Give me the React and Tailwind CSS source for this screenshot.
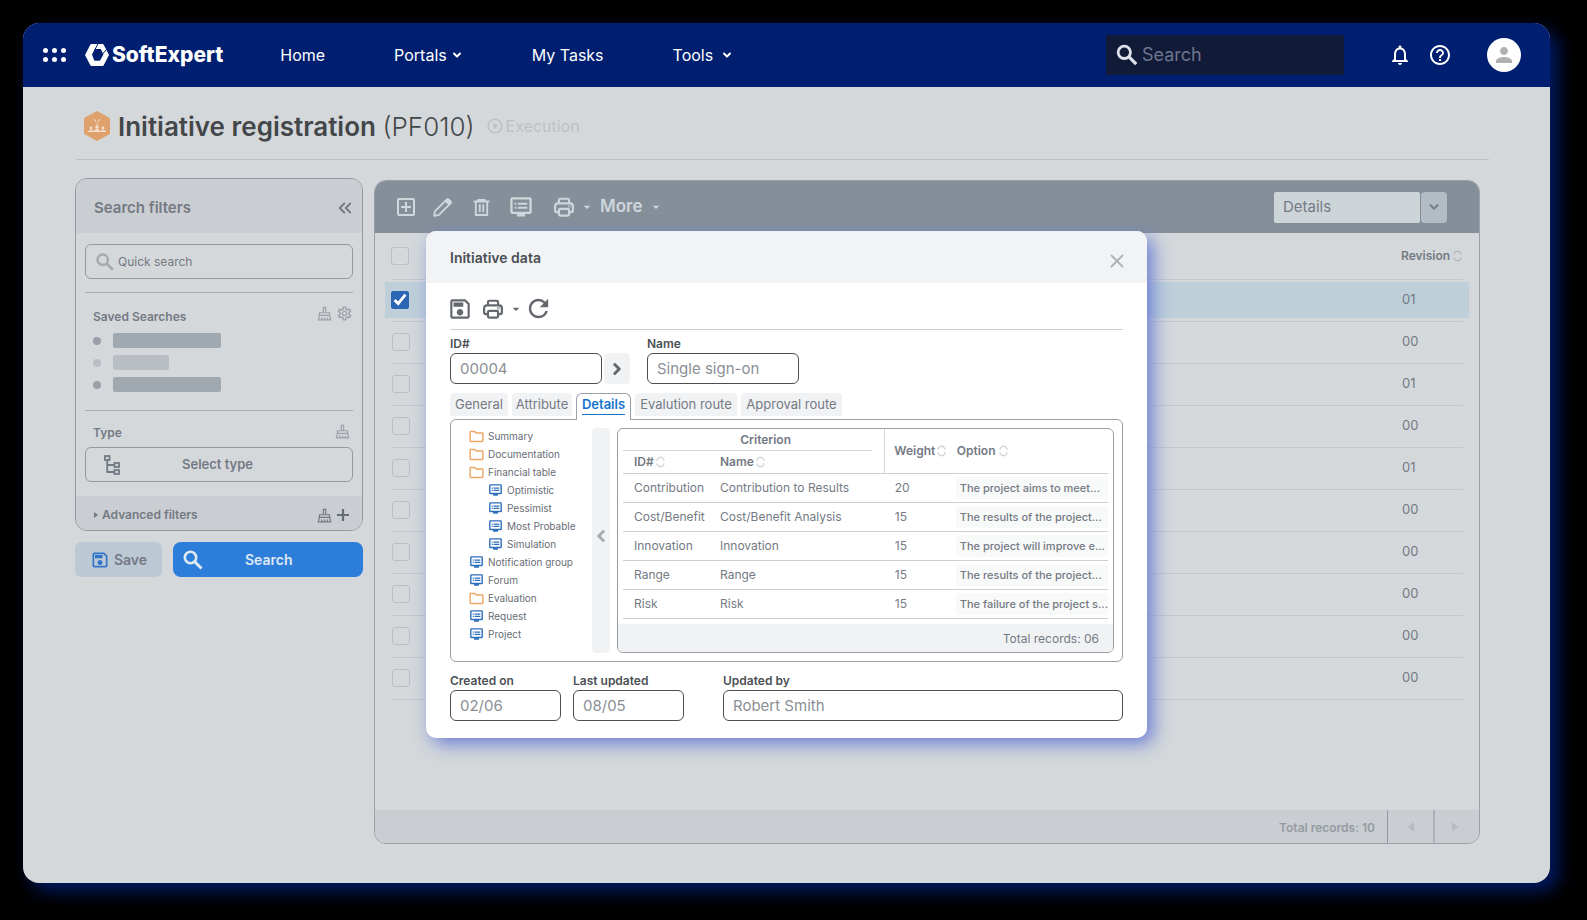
import {
  MdArrowDropDown,
  MdHelpOutline,
  MdNotificationsNone,
  MdOutlineAddBox,
  MdOutlineFolder,
  MdOutlineSave,
  MdOutlineSettings,
  MdPerson,
  MdPlayCircleOutline,
  MdRefresh,
} from 'react-icons/md';
import { ChevronDown, ChevronLeft, ChevronRight, X } from 'lucide-react';

const rows = [
  { revision: '01', selected: true },
  { revision: '00' },
  { revision: '01' },
  { revision: '00' },
  { revision: '01' },
  { revision: '00' },
  { revision: '00' },
  { revision: '00' },
  { revision: '00' },
  { revision: '00' },
];

const tree = [
  { label: 'Summary', folder: true },
  { label: 'Documentation', folder: true },
  { label: 'Financial table', folder: true },
  { label: 'Optimistic', nested: true },
  { label: 'Pessimist', nested: true },
  { label: 'Most Probable', nested: true },
  { label: 'Simulation', nested: true },
  { label: 'Notification group' },
  { label: 'Forum' },
  { label: 'Evaluation', folder: true },
  { label: 'Request' },
  { label: 'Project' },
];

const criteria = [
  { id: 'Contribution', name: 'Contribution to Results', weight: 20, option: 'The project aims to meet...' },
  { id: 'Cost/Benefit', name: 'Cost/Benefit Analysis', weight: 15, option: 'The results of the project...' },
  { id: 'Innovation', name: 'Innovation', weight: 15, option: 'The project will improve e...' },
  { id: 'Range', name: 'Range', weight: 15, option: 'The results of the project...' },
  { id: 'Risk', name: 'Risk', weight: 15, option: 'The failure of the project s...' },
];

function SearchIcon({ className }) {
  return (
    <svg viewBox="0 0 24 24" fill="none" stroke="currentColor" strokeWidth="2.6" className={className}>
      <circle cx="9.500" cy="9.500" r="5.700" />
      <path d="M13.800 13.800l6.700 6.700" strokeWidth="3" />
    </svg>
  );
}

function PrintIcon({ className }) {
  return (
    <svg viewBox="0 0 24 24" fill="none" stroke="currentColor" strokeWidth="2.4" strokeLinejoin="round" className={className}>
      <path d="M6.500 8V4.500a1.500 1.500 0 0 1 1.500-1.500h8a1.500 1.500 0 0 1 1.500 1.500V8" />
      <path d="M6.500 17.500H4.300a2 2 0 0 1-2-2V11a3 3 0 0 1 3-3h13.400a3 3 0 0 1 3 3v4.500a2 2 0 0 1-2 2h-2.200" />
      <rect x="6.500" y="14" width="11" height="7.500" rx="1.500" />
      <circle cx="17.800" cy="11.300" r=".3" />
    </svg>
  );
}

function PencilIcon({ className }) {
  return (
    <svg viewBox="0 0 24 24" fill="none" stroke="currentColor" strokeWidth="2.2" strokeLinejoin="round" className={className}>
      <path d="M2.500 21.500l.8-5L16.800 3a1.600 1.600 0 0 1 2.300 0l2 2a1.600 1.600 0 0 1 0 2.300L7.600 20.700z" />
      <path d="M15.500 4.500l4 4 2-2.500-3.500-3.500z" fill="currentColor" />
    </svg>
  );
}

function TrashIcon({ className }) {
  return (
    <svg viewBox="0 0 24 24" fill="none" stroke="currentColor" strokeWidth="2.4" className={className}>
      <path d="M2 4.500h20M8 4V2.500h8V4" />
      <path d="M4.800 5v16.500h14.400V5" />
      <path d="M9.800 8v10M14.200 8v10" />
    </svg>
  );
}

function ScreenIcon({ className }) {
  return (
    <svg viewBox="0 0 24 22" fill="none" stroke="currentColor" strokeWidth="2.600" className={className}>
      <rect x="1.500" y="1.500" width="21" height="16" rx="1" />
      <path d="M5 7.500h2M8.500 7.500H19M5 11.800h2M8.500 11.800H19" strokeWidth="2.200" />
      <path d="M7.500 18h9v3.500h-9z" fill="currentColor" stroke="none" />
    </svg>
  );
}

function BrushIcon({ className }) {
  return (
    <svg viewBox="0 0 16 16" fill="none" stroke="currentColor" strokeWidth="1.300" className={className}>
      <path d="M6.800 7V1.500h2.400V7" />
      <path d="M2.600 10V7.200h10.800V10" />
      <path d="M2.600 10l-1.200 4.700h13.200L13.400 10z" />
      <path d="M5 14.500v-2.200M8 14.500v-2.200M11 14.500v-2.200" />
    </svg>
  );
}

function TypeTreeIcon({ className }) {
  return (
    <svg viewBox="0 0 16 20" fill="none" stroke="currentColor" strokeWidth="1.800" className={className}>
      <rect x="1" y="1" width="4.500" height="4" />
      <rect x="10.500" y="8" width="4.500" height="4" />
      <rect x="10.500" y="15" width="4.500" height="4" />
      <path d="M3.200 5v12h7.300M3.200 10h7.300" />
    </svg>
  );
}

function SortIcon() {
  return (
    <svg viewBox="0 0 10 14" fill="none" stroke="currentColor" strokeWidth="1.400" className="h-3 w-[9px] opacity-35">
      <path d="M1 5.500V4l2.500-2.500h3L9 4v1.500M1 8.500V10l2.500 2.500h3L9 10V8.500" />
    </svg>
  );
}

function Logo() {
  return (
    <div className="flex items-center gap-[3px]">
      <svg viewBox="0 0 24 22" className="h-[22px] w-6">
        <path
          fillRule="evenodd"
          fill="#fff"
          d="M6.500 0h11q.8 0 1.200.8L24 11l-5.300 10.200q-.4.800-1.200.8h-11q-.8 0-1.200-.8L0 11 5.300.8Q5.700 0 6.500 0zM9.800 5L7 10.500l2 5.500q.3.800 1.200.8h4q.8 0 1.200-.8l3-5.500L15.800 5z"
        />
        <path d="M12.800 0L10 5.500M21.500 5.500L17.500 10" stroke="#001f71" strokeWidth="1" />
      </svg>
      <span className="text-[21px] leading-7 font-extrabold text-white">SoftExpert</span>
    </div>
  );
}

function TopBar() {
  return (
    <header className="flex h-16 items-center bg-[#001f71] pr-[29px] pl-5 text-white">
      <button aria-label="Applications" className="grid grid-cols-3 gap-x-1 gap-y-1">
        {[0, 1, 2, 3, 4, 5].map((dot) => (
          <span key={dot} className="h-[5px] w-[5px] rounded-full bg-white" />
        ))}
      </button>
      <a href="#home" className="ml-[19px]"><Logo /></a>
      <nav className="ml-[57px] flex items-center gap-[69px] text-base">
        <a href="#home">Home</a>
        <button className="flex items-center gap-1">
          Portals
          <ChevronDown className="h-3 w-3" strokeWidth={4} />
        </button>
        <a href="#tasks">My Tasks</a>
        <button className="flex items-center gap-2">
          Tools
          <ChevronDown className="h-3 w-3" strokeWidth={4} />
        </button>
      </nav>
      <label className="ml-auto flex h-10 w-[238px] items-center gap-0.5 bg-[#111a37] pl-2">
        <SearchIcon className="h-[26px] w-[26px] shrink-0 text-[#dde3ea]" />
        <input
          aria-label="Search"
          placeholder="Search"
          className="w-full min-w-0 bg-transparent text-lg outline-none placeholder:text-[#6d7590]"
        />
      </label>
      <button aria-label="Notifications" className="ml-11">
        <MdNotificationsNone className="h-6 w-6" />
      </button>
      <button aria-label="Help" className="ml-4">
        <MdHelpOutline className="h-6 w-6" />
      </button>
      <button aria-label="Account" className="ml-[35px] flex h-[34px] w-[34px] items-center justify-center rounded-full bg-white">
        <MdPerson className="h-6 w-6 text-[#b0b0b0]" />
      </button>
    </header>
  );
}

function PageTitle() {
  return (
    <div className="mr-[61px] ml-[53px] flex h-[73px] items-center border-b border-[#bbc0c5] pt-1.5 pl-2">
      <svg viewBox="0 0 26 30" className="h-[30px] w-[26px]">
        <path d="M13 0l12 6.500q1 .5 1 1.500v14q0 1-1 1.500L13 30 1 23.500q-1-.5-1-1.500V8q0-1 1-1.500z" fill="#dfa26d" />
        <g fill="#f3dfcf">
          <circle cx="7" cy="17" r="1.500" />
          <circle cx="13" cy="16" r="1.700" />
          <circle cx="19" cy="17" r="1.500" />
          <path d="M4 21q0-2 3-2t3 2zM10 21q0-3 3-3t3 3zM16 21q0-2 3-2t3 2z" />
        </g>
        <path d="M10 8l2 3M16 8l-2 3M13 12v2" stroke="#f3dfcf" fill="none" />
      </svg>
      <h1 className="ml-2 text-[26px] font-semibold whitespace-nowrap text-[#434749]">
        Initiative registration <span className="font-light">(PF010)</span>
      </h1>
      <span className="ml-[11px] flex items-center gap-0.5 text-base text-[#bcc1c6]">
        <MdPlayCircleOutline className="h-[18px] w-[18px]" />
        Execution
      </span>
    </div>
  );
}

function SearchFilters() {
  return (
    <aside className="-mt-0.5 w-72 shrink-0 text-[#747a84]">
      <div className="overflow-hidden rounded-xl border border-[#9499a1]">
        <div className="flex h-[54px] items-center justify-between bg-[#cacdd2] pt-1 pr-[5px] pl-[18px]">
          <h2 className="text-[15px] font-semibold">Search filters</h2>
          <button aria-label="Collapse filters" className="flex">
            <ChevronLeft className="-mr-3 h-[18px] w-[18px]" strokeWidth={2.5} />
            <ChevronLeft className="h-[18px] w-[18px]" strokeWidth={2.5} />
          </button>
        </div>
        <div className="px-[9px] pt-[11px]">
          <label className="flex h-[35px] items-center gap-0.5 rounded-md border border-[#9499a1] pl-2">
            <SearchIcon className="h-[22px] w-[22px] shrink-0 text-[#a3a9ae]" />
            <input
              aria-label="Quick search"
              placeholder="Quick search"
              className="w-full min-w-0 bg-transparent text-xs outline-none placeholder:text-[#747a84]"
            />
          </label>
          <div className="mt-[13px] h-[119px] border-y border-[#a9adb3] pt-3 pl-2">
            <div className="flex items-start justify-between">
              <h3 className="pt-1 text-xs leading-4 font-semibold">Saved Searches</h3>
              <div className="flex items-center gap-1 text-[#9ca1a9]">
                <BrushIcon className="h-[15px] w-[15px]" />
                <MdOutlineSettings className="h-[17px] w-[17px]" />
              </div>
            </div>
            <ul className="mt-2 space-y-[7px]">
              <li className="flex items-center gap-3">
                <span className="h-2 w-2 rounded-full bg-[#9a9fa8]" />
                <span className="h-[15px] w-[108px] rounded-xs bg-[#a1a9b0]" />
              </li>
              <li className="flex items-center gap-3">
                <span className="h-2 w-2 rounded-full bg-[#b9bdc4]" />
                <span className="h-[15px] w-14 rounded-xs bg-[#b9bec5]" />
              </li>
              <li className="flex items-center gap-3">
                <span className="h-2 w-2 rounded-full bg-[#9a9fa8]" />
                <span className="h-[15px] w-[108px] rounded-xs bg-[#a1a9b0]" />
              </li>
            </ul>
          </div>
          <div className="mt-[10px] flex items-center justify-between pr-[3px] pl-2">
            <h3 className="pt-1 text-xs leading-4 font-semibold">Type</h3>
            <BrushIcon className="h-[15px] w-[15px] text-[#9ca1a9]" />
          </div>
          <button className="mt-1.5 flex h-[35px] w-full items-center rounded-md border border-[#9499a1] pl-[18px] text-[13px] font-semibold">
            <TypeTreeIcon className="h-5 w-4" />
            <span className="ml-[62px]">Select type</span>
          </button>
        </div>
        <div className="mt-[14px] flex h-[34px] items-center bg-[#cacdd2] pt-1 pr-3 pl-[18px]">
          <span className="h-0 w-0 border-y-[3px] border-l-4 border-y-transparent border-l-[#747a84]" />
          <span className="ml-1 text-xs font-semibold">Advanced filters</span>
          <BrushIcon className="ml-auto h-[15px] w-[15px]" />
          <button aria-label="Add filter" className="ml-1 text-[#686e78]">
            <svg viewBox="0 0 14 14" className="h-[14px] w-[14px]">
              <path d="M7 1v12M1 7h12" stroke="currentColor" strokeWidth="2.200" />
            </svg>
          </button>
        </div>
      </div>
      <div className="mt-[11px] flex gap-[11px]">
        <button className="flex h-[35px] w-[87px] items-center justify-center gap-1 rounded-md bg-[#bcc8d4] text-sm font-semibold text-[#747a84]">
          <MdOutlineSave className="h-5 w-5 text-[#2f74c9]" />
          Save
        </button>
        <button className="flex h-[35px] flex-1 items-center rounded-lg bg-[#2d7edb] pl-2 text-sm font-semibold text-[#dfe9f2]">
          <SearchIcon className="h-6 w-6" />
          <span className="ml-10">Search</span>
        </button>
      </div>
    </aside>
  );
}

function Checkbox({ label, checked }) {
  return (
    <input
      type="checkbox"
      aria-label={label}
      defaultChecked={checked}
      className="h-[18px] w-[18px] appearance-none rounded-[3px] border border-[#bbbfc5] accent-[#2a66b4] checked:appearance-auto"
    />
  );
}

function Records() {
  return (
    <section className="flex min-w-0 flex-1 flex-col overflow-hidden rounded-xl border border-[#9aa0a7] text-[#747a84]">
      <div className="flex h-[52px] shrink-0 items-center bg-[#848f99] pr-8 pl-[19px] text-[#cfd6dc]">
        <button aria-label="New"><MdOutlineAddBox className="h-6 w-6" /></button>
        <button aria-label="Edit" className="ml-3.5"><PencilIcon className="h-[21px] w-[21px]" /></button>
        <button aria-label="Delete" className="ml-[19px]"><TrashIcon className="h-[19px] w-[19px]" /></button>
        <button aria-label="View" className="ml-[19px]"><ScreenIcon className="h-5 w-[22px]" /></button>
        <button aria-label="Print" className="ml-[21px] flex items-center">
          <PrintIcon className="h-[22px] w-[22px]" />
          <MdArrowDropDown className="ml-1 h-4 w-4" />
        </button>
        <button className="ml-[5px] flex items-center gap-1.5 text-[17px] font-semibold">
          More
          <MdArrowDropDown className="h-4 w-4" />
        </button>
        <select
          aria-label="Layout"
          className="ml-auto h-[31px] w-[146px] appearance-none rounded-xs bg-[#ced5d9] pl-[9px] text-[15px] text-[#747a84]"
        >
          <option>Details</option>
        </select>
        <button aria-label="Change layout" className="ml-px flex h-[31px] w-[26px] items-center justify-center rounded-sm bg-[#b3bbc5] text-[#7b828b]">
          <ChevronDown className="h-[14px] w-[14px]" strokeWidth={4} />
        </button>
      </div>
      <div className="flex-1 px-4">
        <table className="w-full border-collapse">
          <thead>
            <tr className="h-[46px] border-b border-[#c3c7cb]">
              <th className="p-0"><div className="flex"><Checkbox label="Select all" /></div></th>
              <th className="w-[62px] p-0">
                <span className="flex items-center gap-[3px] text-xs font-semibold">
                  Revision <SortIcon />
                </span>
              </th>
            </tr>
          </thead>
          <tbody>
            {rows.map((row, i) =>
              row.selected ? (
                <tr key={i} className="h-[42px] border-b border-[#c3c7cb]">
                  <td className="p-0">
                    <div className="-ml-1.5 flex h-9 items-center bg-[#becfda] pl-1.5">
                      <Checkbox label={`Record ${i + 1}`} checked />
                    </div>
                  </td>
                  <td className="p-0 text-[13px]">
                    <div className="-mr-1.5 flex h-9 items-center bg-[#becfda] pl-px">{row.revision}</div>
                  </td>
                </tr>
              ) : (
                <tr key={i} className="h-[42px] border-b border-[#c3c7cb]">
                  <td className="p-0 pl-px"><div className="flex"><Checkbox label={`Record ${i + 1}`} /></div></td>
                  <td className="p-0 pl-px text-[13px]">{row.revision}</td>
                </tr>
              ),
            )}
          </tbody>
        </table>
      </div>
      <footer className="flex h-[33px] shrink-0 items-stretch justify-end bg-[#cacdd2]">
        <p className="mr-3 pt-2.5 text-xs font-semibold text-[#959ba3]">Total records: 10</p>
        <button aria-label="Previous page" className="flex w-[46px] items-center justify-center border-l border-[#9499a1]">
          <span className="h-0 w-0 border-y-[5px] border-r-[6px] border-y-transparent border-r-[#b7bbc1]" />
        </button>
        <button aria-label="Next page" className="flex w-[46px] items-center border-l-2 border-[#adb1b7] pl-[17px]">
          <span className="h-0 w-0 border-y-[5px] border-l-[6px] border-y-transparent border-l-[#b7bbc1]" />
        </button>
      </footer>
    </section>
  );
}

function Field({ id, label, value, className }) {
  return (
    <div className={className}>
      <label htmlFor={id} className="block text-xs leading-4 font-semibold text-[#4b5055]">{label}</label>
      <input
        id={id}
        defaultValue={value}
        className="mt-px h-[31px] w-full rounded-md border border-[#4b4e52] bg-white px-[9px] text-[15px] text-[#8b8f94] outline-none"
      />
    </div>
  );
}

function Tabs() {
  const tab = 'h-[23px] rounded-t-sm bg-[#f1f2f4] text-center text-[13px] whitespace-nowrap text-[#747a84]';
  return (
    <div role="tablist" className="flex h-[26px] items-start gap-1">
      <button role="tab" className={`${tab} w-[58px]`}>General</button>
      <button role="tab" className={`${tab} w-[60px]`}>Attribute</button>
      <button
        role="tab"
        aria-selected="true"
        className="z-10 h-[27px] w-[55px] rounded-t-md border border-b-0 border-[#9a9ea5] bg-white pb-1 text-[13px] font-semibold text-[#1573cf]"
      >
        <span className="border-b border-[#1573cf] pb-0.5">Details</span>
      </button>
      <button role="tab" className={`${tab} w-[102px]`}>Evalution route</button>
      <button role="tab" className={`${tab} w-[101px]`}>Approval route</button>
    </div>
  );
}

function CriterionTable() {
  return (
    <div className="flex min-w-0 flex-1 flex-col overflow-hidden rounded-md border border-[#9a9ea5] text-xs text-[#747a84]">
      <table className="mx-[5px] border-collapse">
        <thead className="text-left">
          <tr className="h-[22px]">
            <th colSpan={2} className="p-0">
              <div className="mr-3 h-[22px] border-b border-[#d2d5d8] pt-[3px] pl-9 text-center font-semibold">Criterion</div>
            </th>
            <th rowSpan={2} className="w-[71px] border-l border-[#d2d5d8] p-0 pl-[9px] font-semibold">
              <span className="flex items-center gap-0.5">Weight <SortIcon /></span>
            </th>
            <th rowSpan={2} className="w-[152px] p-0 pl-px font-semibold">
              <span className="flex items-center gap-[3px]">Option <SortIcon /></span>
            </th>
          </tr>
          <tr className="h-[22px]">
            <th className="w-[97px] p-0 pl-[11px] font-semibold">
              <span className="flex items-center gap-0.5">ID# <SortIcon /></span>
            </th>
            <th className="p-0 font-semibold">
              <span className="flex items-center gap-0.5">Name <SortIcon /></span>
            </th>
          </tr>
        </thead>
        <tbody className="border-t border-[#cdd0d3]">
          {criteria.map((item) => (
            <tr key={item.id} className="h-[29px] border-b border-[#cdd0d3]">
              <td className="p-0 pl-[11px]">{item.id}</td>
              <td className="p-0 whitespace-nowrap">{item.name}</td>
              <td className="p-0 pl-[10px]">{item.weight}</td>
              <td className="p-0">
                <div className="h-[22px] rounded-xs bg-[#f8f9f9] pl-1 text-[11px] leading-[22px] font-medium whitespace-nowrap">
                  {item.option}
                </div>
              </td>
            </tr>
          ))}
        </tbody>
      </table>
      <p className="mt-[5px] h-7 bg-[#f1f2f4] pt-0.5 pr-[14px] text-right leading-[26px]">Total records: 06</p>
    </div>
  );
}

function DetailsPanel() {
  return (
    <div className="flex rounded-md border border-[#9a9ea5] py-2 pr-2">
      <ul className="-mt-px w-[141px] shrink-0 pl-[17px]">
        {tree.map((item) => (
          <li
            key={item.label}
            className={`flex h-[18px] items-center text-[10px] whitespace-nowrap text-[#686d75] ${item.nested ? 'pl-[19px]' : ''}`}
          >
            {item.folder ? (
              <MdOutlineFolder className="h-[17px] w-[17px] shrink-0 text-[#eda565]" />
            ) : (
              <span className="flex w-[17px] shrink-0 justify-center text-[#2e6fbd]">
                <ScreenIcon className="h-3 w-[13px]" />
              </span>
            )}
            <span className="ml-[3px]">{item.label}</span>
          </li>
        ))}
      </ul>
      <button aria-label="Collapse tree" className="mr-[7px] flex w-[18px] shrink-0 items-center justify-center rounded-sm bg-[#f1f2f4] pb-2">
        <ChevronLeft className="h-[18px] w-[18px] text-[#a8abb0]" strokeWidth={4} />
      </button>
      <CriterionTable />
    </div>
  );
}

function InitiativeDialog() {
  return (
    <div
      role="dialog"
      aria-label="Initiative data"
      className="w-[721px] max-w-full overflow-hidden rounded-[10px] bg-white shadow-[6px_6px_18px_#6c7fd4]"
    >
      <div className="flex h-[52px] items-center justify-between bg-[#f1f3f5] pt-0.5 pr-[19px] pl-6">
        <h2 className="text-sm font-semibold text-[#4b5055]">Initiative data</h2>
        <button aria-label="Close" className="pt-1.5 text-[#b0b3b6]">
          <X className="h-[22px] w-[22px]" />
        </button>
      </div>
      <div className="px-6 pb-[17px]">
        <div className="flex h-[47px] items-center border-b border-[#cdd0d3] pt-[5px] text-[#63676e]">
          <button aria-label="Save" className="-ml-[3px]"><MdOutlineSave className="h-[26px] w-[26px]" /></button>
          <button aria-label="Print" className="ml-[9px] flex items-center">
            <PrintIcon className="h-[22px] w-[22px]" />
            <MdArrowDropDown className="ml-1 h-4 w-4" />
          </button>
          <button aria-label="Reload"><MdRefresh className="h-[29px] w-[29px]" /></button>
        </div>
        <div className="mt-[6px] flex items-end">
          <Field id="record-id" label="ID#" value="00004" className="w-[152px]" />
          <button aria-label="Next record" className="ml-0.5 flex h-[31px] w-[26px] items-center justify-center rounded-sm bg-[#f1f2f4] text-[#63676e]">
            <ChevronRight className="h-[18px] w-[18px]" strokeWidth={4} />
          </button>
          <Field id="record-name" label="Name" value="Single sign-on" className="ml-[17px] w-[152px]" />
        </div>
        <div className="mt-[9px]">
          <Tabs />
          <DetailsPanel />
        </div>
        <div className="mt-[11px] flex">
          <Field id="created" label="Created on" value="02/06" className="w-[111px]" />
          <Field id="updated" label="Last updated" value="08/05" className="ml-3 w-[111px]" />
          <Field id="updated-by" label="Updated by" value="Robert Smith" className="ml-[39px] flex-1" />
        </div>
      </div>
    </div>
  );
}

export default function App() {
  return (
    <div className="flex min-h-screen bg-black pt-[23px] pr-[37px] pb-[37px] pl-[23px] font-['Inter',sans-serif]">
      <div className="flex min-w-0 flex-1 rounded-2xl shadow-[8px_8px_18px_#001a66]">
        <div className="relative flex min-w-0 flex-1 flex-col overflow-hidden rounded-2xl bg-[#d4d8db]">
          <TopBar />
          <PageTitle />
          <main className="flex flex-1 gap-[11px] pt-5 pr-[70px] pb-[39px] pl-[52px]">
            <SearchFilters />
            <Records />
          </main>
          <div className="absolute inset-x-0 top-52 flex justify-center">
            <InitiativeDialog />
          </div>
        </div>
      </div>
    </div>
  );
}
